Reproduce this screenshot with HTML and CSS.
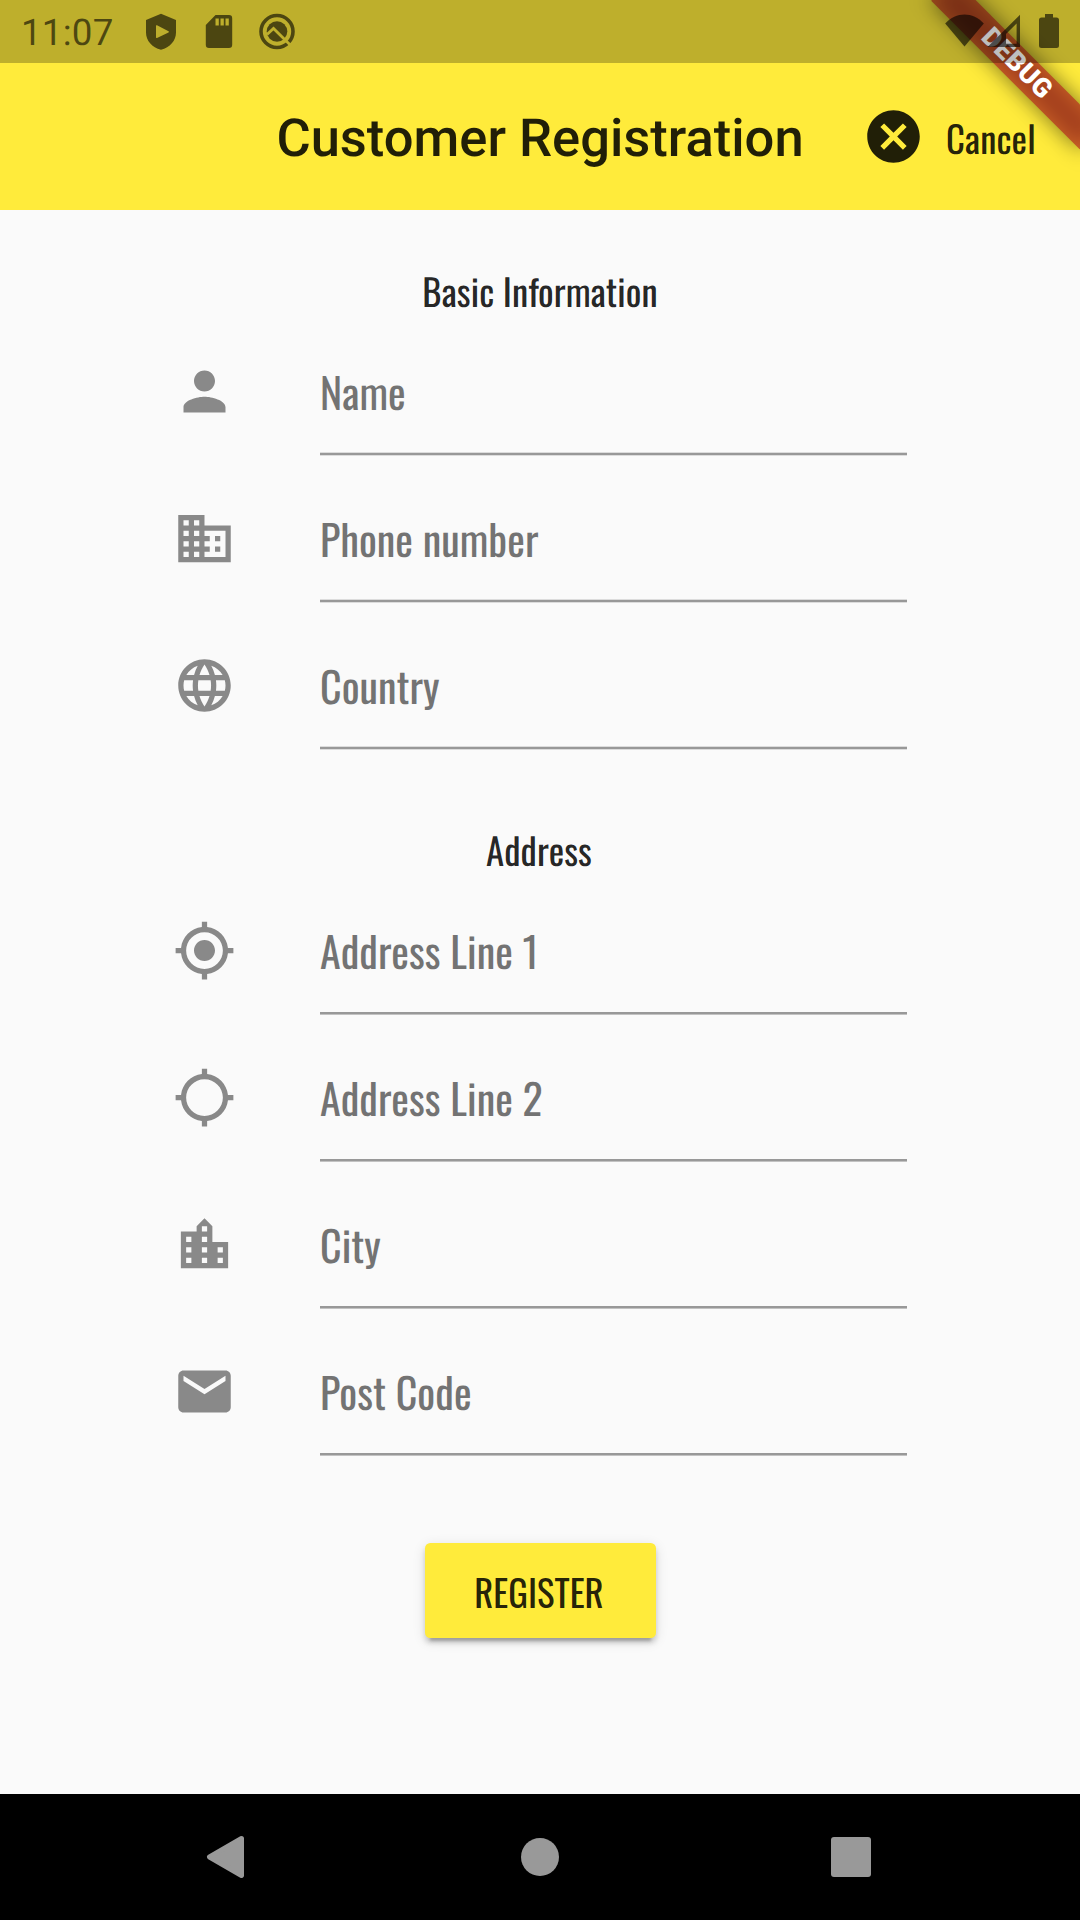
FILE: index.html
```html
<!DOCTYPE html>
<html lang="en">
<head>
<meta charset="utf-8">
<title>Customer Registration</title>
<link rel="stylesheet" href="styles.css">
</head>
<body>
<div class="screen">
  <header class="top">
    <div class="status-space"></div>
    <div class="app-bar">
      <h1 class="title">Customer Registration</h1>
      <div class="cancel">
        <svg class="icon" viewBox="0 0 24 24"><path d="M12 2C6.47 2 2 6.47 2 12s4.47 10 10 10 10-4.47 10-10S17.53 2 12 2zm5 13.59L15.59 17 12 13.41 8.41 17 7 15.59 10.59 12 7 8.41 8.41 7 12 10.59 15.59 7 17 8.41 13.41 12 17 15.59z"/></svg>
        <span>Cancel</span>
      </div>
    </div>
    <div class="debug-clip">
      <div class="debug-shadow"></div>
      <div class="debug-banner">DEBUG</div>
    </div>
    <div class="status-bar">
      <span class="time">11:07</span>
      <svg class="status-icons" width="180" height="63" viewBox="130 0 180 63">
        <mask id="q-cut" maskUnits="userSpaceOnUse" x="255" y="10" width="45" height="45">
          <rect x="255" y="10" width="45" height="45" fill="#fff"/>
          <path d="M267 34.500L273.500 28.500L290.500 45.300" fill="none" stroke="#000" stroke-width="2.800"/>
        </mask>
        <path fill-rule="evenodd" d="M161 13.7L176 20v12.500C176 40.500 170 47.500 161 49.700C152 47.500 146 40.500 146 32.500V20zM156.700 25.300Q156 25 156 26V37.200Q156 38.300 157 37.900L168.500 32.400Q169.500 31.800 168.500 31.200L157 25.300z"/>
        <path fill-rule="evenodd" d="M215.500 15H229Q232.200 15 232.200 18.200V44.800Q232.200 48 229 48H209Q205.800 48 205.800 44.800V25zM215.500 18.500V25.500H218.800V18.500zM220.500 18.500V25.500H223.800V18.500zM225.500 18.500V25.500H228.800V18.500z"/>
        <g mask="url(#q-cut)">
          <circle class="q-ring" cx="277" cy="31.500" r="16"/>
          <circle cx="277" cy="31.500" r="10.300"/>
        </g>
      </svg>
      <svg class="status-icons status-right" width="150" height="63" viewBox="930 0 150 63">
        <path d="M964.500 46.500L945.200 23.500C956 11.500 973 11.500 983.800 23.500z"/>
        <path fill-rule="evenodd" d="M1020 14.700V47H987.500zM1016.600 23.500L1006 34V43.700H1016.600z"/>
        <path d="M1045 14h8v3.400h3.500q2.500 0 2.500 2.500V45.400q0 2.500-2.500 2.500h-15q-2.500 0-2.500-2.500V19.900q0-2.500 2.500-2.500h3.500z"/>
      </svg>
    </div>
  </header>

  <main class="form">
    <h2 class="section">Basic Information</h2>
    <div class="fields fields-basic">
      <div class="field">
        <svg class="icon" viewBox="0 0 24 24"><path d="M12 12c2.21 0 4-1.79 4-4s-1.790-4-4-4-4 1.790-4 4 1.790 4 4 4zm0 2c-2.670 0-8 1.340-8 4v2h16v-2c0-2.660-5.330-4-8-4z"/></svg>
        <div class="input">Name</div>
      </div>
      <div class="field">
        <svg class="icon" viewBox="0 0 24 24"><path d="M12 7V3H2v18h20V7H12zM6 19H4v-2h2v2zm0-4H4v-2h2v2zm0-4H4V9h2v2zm0-4H4V5h2v2zm4 12H8v-2h2v2zm0-4H8v-2h2v2zm0-4H8V9h2v2zm0-4H8V5h2v2zm10 12h-8v-2h2v-2h-2v-2h2v-2h-2V9h8v10zm-2-8h-2v2h2v-2zm0 4h-2v2h2v-2z"/></svg>
        <div class="input">Phone number</div>
      </div>
      <div class="field">
        <svg class="icon" viewBox="0 0 24 24"><path d="M11.990 2C6.470 2 2 6.480 2 12s4.470 10 9.990 10C17.520 22 22 17.520 22 12S17.520 2 11.990 2zm6.930 6h-2.950c-.320-1.250-.780-2.450-1.380-3.560 1.840.630 3.370 1.910 4.330 3.560zM12 4.040c.830 1.200 1.480 2.530 1.910 3.960h-3.820c.430-1.430 1.080-2.760 1.910-3.960zM4.260 14C4.100 13.360 4 12.690 4 12s.100-1.360.260-2h3.380c-.080.660-.140 1.320-.140 2 0 .680.060 1.340.140 2H4.260zm.820 2h2.950c.320 1.250.780 2.450 1.380 3.560-1.840-.630-3.370-1.900-4.330-3.560zm2.950-8H5.080c.960-1.660 2.490-2.930 4.330-3.560C8.810 5.550 8.350 6.750 8.030 8zM12 19.960c-.830-1.200-1.480-2.530-1.910-3.960h3.820c-.430 1.430-1.080 2.760-1.910 3.960zM14.340 14H9.660c-.090-.660-.160-1.320-.160-2 0-.680.070-1.350.160-2h4.680c.090.650.160 1.320.160 2 0 .680-.070 1.340-.160 2zm.250 5.560c.600-1.110 1.060-2.310 1.380-3.560h2.950c-.960 1.650-2.490 2.930-4.330 3.560zM16.360 14c.080-.660.140-1.320.140-2 0-.680-.060-1.340-.140-2h3.380c.160.640.260 1.310.260 2s-.100 1.360-.260 2h-3.380z"/></svg>
        <div class="input">Country</div>
      </div>
    </div>

    <h2 class="section section-address">Address</h2>
    <div class="fields">
      <div class="field">
        <svg class="icon" viewBox="0 0 24 24"><path d="M12 8c-2.210 0-4 1.790-4 4s1.790 4 4 4 4-1.790 4-4-1.790-4-4-4zm8.940 3c-.460-4.170-3.770-7.480-7.940-7.940V1h-2v2.060C6.830 3.520 3.520 6.830 3.060 11H1v2h2.060c.460 4.170 3.770 7.480 7.940 7.940V23h2v-2.060c4.170-.460 7.480-3.770 7.940-7.940H23v-2h-2.060zM12 19c-3.870 0-7-3.130-7-7s3.130-7 7-7 7 3.130 7 7-3.130 7-7 7z"/></svg>
        <div class="input">Address Line 1</div>
      </div>
      <div class="field">
        <svg class="icon" viewBox="0 0 24 24"><path d="M20.940 11c-.460-4.170-3.770-7.480-7.940-7.940V1h-2v2.060C6.830 3.520 3.520 6.830 3.060 11H1v2h2.060c.460 4.170 3.770 7.480 7.940 7.940V23h2v-2.060c4.170-.460 7.480-3.770 7.940-7.940H23v-2h-2.060zM12 19c-3.870 0-7-3.130-7-7s3.130-7 7-7 7 3.130 7 7-3.130 7-7 7z"/></svg>
        <div class="input">Address Line 2</div>
      </div>
      <div class="field">
        <svg class="icon" viewBox="0 0 24 24"><path d="M15 11V5l-3-3-3 3v2H3v14h18V11h-6zm-8 8H5v-2h2v2zm0-4H5v-2h2v2zm0-4H5V9h2v2zm6 8h-2v-2h2v2zm0-4h-2v-2h2v2zm0-4h-2V9h2v2zm0-4h-2V5h2v2zm6 12h-2v-2h2v2zm0-4h-2v-2h2v2z"/></svg>
        <div class="input">City</div>
      </div>
      <div class="field">
        <svg class="icon" viewBox="0 0 24 24"><path d="M20 4H4c-1.100 0-1.990.900-1.990 2L2 18c0 1.100.900 2 2 2h16c1.100 0 2-.900 2-2V6c0-1.100-.900-2-2-2zm0 4l-8 5-8-5V6l8 5 8-5v2z"/></svg>
        <div class="input">Post Code</div>
      </div>
    </div>

    <button class="register">REGISTER</button>
  </main>

  <nav class="nav-bar">
    <svg width="1080" height="126" viewBox="0 0 1080 126">
      <path class="nav-shape" d="M241.500 44.500L209.500 63L241.500 81.500z"/>
      <circle cx="540" cy="63" r="19"/>
      <rect x="831" y="43" width="40" height="40" rx="3"/>
    </svg>
  </nav>
</div>
</body>
</html>
```
FILE: styles.css
```css
* {
  box-sizing: border-box;
}

body {
  margin: 0;
  background: #fafafa;
  font-family: Oswald, "Roboto Condensed", Roboto, sans-serif;
  text-rendering: geometricPrecision;
}

.screen {
  width: 1080px;
  height: 1920px;
  display: flex;
  flex-direction: column;
  overflow: hidden;
}

.icon {
  width: 63px;
  height: 63px;
  flex: none;
  display: block;
}

/* App bar */
.top {
  position: relative;
  height: 210px;
  flex: none;
  background: #ffeb3b;
  color: rgba(0, 0, 0, 0.87);
}

.status-space {
  height: 63px;
}

.app-bar {
  height: 147px;
  display: grid;
  grid-template-columns: 261px 1fr 261px;
  align-items: center;
}

.title {
  grid-column: 2;
  margin: 0;
  padding-top: 2px;
  text-align: center;
  white-space: nowrap;
  font: 500 52.5px/62px Roboto, sans-serif;
}

.cancel {
  display: flex;
  align-items: center;
  gap: 21px;
  padding-left: 43px;
  font-size: 36.75px;
  letter-spacing: 0.15px;
}

.cancel span {
  padding-top: 2px;
}

.cancel .icon {
  fill: rgba(0, 0, 0, 0.87);
}

/* Diagonal corner ribbon */
.debug-clip {
  position: absolute;
  inset: 0;
  overflow: hidden;
}

.debug-shadow,
.debug-banner {
  position: absolute;
  left: 975px;
  top: 73.5px;
  width: 210px;
  height: 31.5px;
  transform-origin: 105px -73.5px;
  transform: rotate(45deg);
}

.debug-shadow {
  background: rgba(0, 0, 0, 0.5);
  filter: blur(10.4px);
}

.debug-banner {
  background: rgba(183, 28, 28, 0.627);
  color: #fff;
  text-align: center;
  font: 900 26.775px/31.5px Roboto, sans-serif;
  letter-spacing: 0.4px;
}

/* Status bar */
.status-bar {
  position: absolute;
  inset: 0 0 auto 0;
  height: 63px;
  display: flex;
  align-items: center;
  background: rgba(0, 0, 0, 0.255);
}

.time {
  width: 130px;
  padding: 1px 0 0 21px;
  color: rgba(0, 0, 0, 0.6);
  font: 400 36.75px/43px Roboto, sans-serif;
  letter-spacing: 0.2px;
}

.status-icons {
  display: block;
  fill: rgba(0, 0, 0, 0.6);
}

.status-right {
  margin-left: auto;
}

.q-ring {
  fill: none;
  stroke: rgba(0, 0, 0, 0.6);
  stroke-width: 3.6;
}

/* Form */
.form {
  flex: 1;
  display: flex;
  flex-direction: column;
  align-items: center;
}

.section {
  margin: 54px 0 0;
  height: 53px;
  color: rgba(0, 0, 0, 0.87);
  font-size: 36.75px;
  font-weight: 400;
  line-height: 54px;
  letter-spacing: 0.08px;
}

.section-address {
  margin-top: 65px;
  padding-right: 2px;
}

.fields {
  width: 734px;
}

.field {
  height: 147px;
  display: flex;
  gap: 84px;
}

.field .icon {
  margin-top: 42.5px;
  fill: #898989;
}

.input {
  flex: 1;
  height: 139px;
  padding-top: 43px;
  background: linear-gradient(#989898 2px, #c2c2c2 2px) bottom / 100% 3px no-repeat;
  color: #737373;
  font-size: 42px;
  line-height: 64px;
  letter-spacing: 0.05px;
}

.fields-basic .input {
  background: linear-gradient(#dcdcdc 1px, #989898 1px, #989898 3px, #dcdcdc 3px) bottom / 100% 4px no-repeat;
}

.register {
  width: 231px;
  height: 94.5px;
  margin-top: 79px;
  padding: 2px 2px 0 0;
  border: 0;
  border-radius: 5.25px;
  background: #ffeb3b;
  color: rgba(0, 0, 0, 0.87);
  box-shadow: 0 8px 3px -5px rgba(0, 0, 0, 0.2), 0 5px 5px rgba(0, 0, 0, 0.14), 0 3px 13px rgba(0, 0, 0, 0.12);
  font-family: inherit;
  font-size: 36.75px;
  font-weight: 400;
}

/* System navigation */
.nav-bar {
  height: 126px;
  flex: none;
  background: #000;
  fill: #999;
}

.nav-bar svg {
  display: block;
}

.nav-shape {
  stroke: #999;
  stroke-width: 5;
  stroke-linejoin: round;
}
```
